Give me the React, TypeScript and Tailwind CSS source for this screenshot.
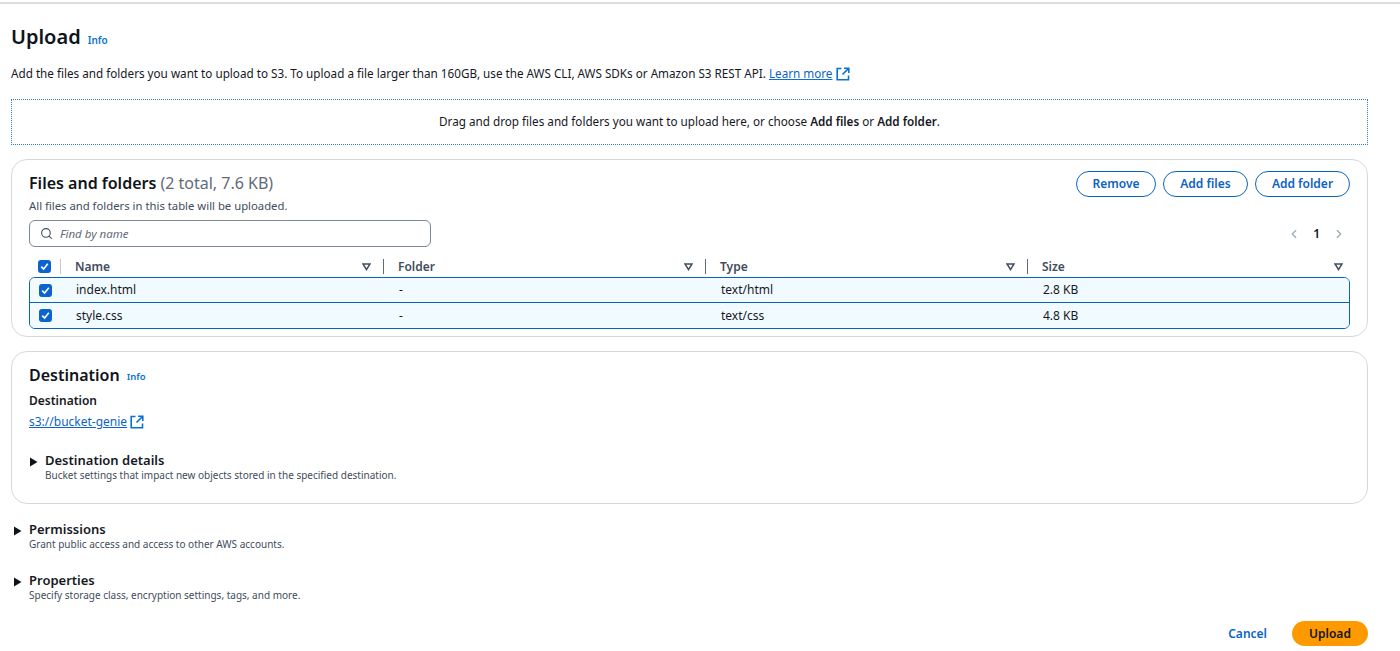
import React from "react";
import { Search, ChevronLeft, ChevronRight } from "lucide-react";

const grid = "grid grid-cols-[32px_323px_322px_322px_322px]";

function Ext() {
  return (
    <svg width="14" height="14" viewBox="0 0 14 14" fill="none" stroke="#0972d3" strokeWidth="1.6" className="shrink-0">
      <path d="M5.5 1.5H1.2v11.3h11.3V8.5" />
      <path d="M8 1.2h4.8V6" />
      <path d="M12.6 1.4 6.5 7.5" />
    </svg>
  );
}

function Check() {
  return (
    <span className="flex h-[13px] w-[13px] items-center justify-center rounded-[3px] bg-[#0b63d0]">
      <svg width="9" height="9" viewBox="0 0 9 9" fill="none" stroke="#fff" strokeWidth="1.6">
        <path d="M1.2 4.6 3.6 7 7.8 1.8" />
      </svg>
    </span>
  );
}

function Caret() {
  return (
    <svg width="9" height="8" viewBox="0 0 9 8" fill="none" stroke="#414d5c" strokeWidth="1.5" className="shrink-0">
      <path d="M1 1h7L4.5 6.6z" />
    </svg>
  );
}

function Arrow() {
  return (
    <svg width="9" height="10" viewBox="0 0 9 10" className="shrink-0">
      <path d="M1 .5 8.5 5 1 9.5z" fill="#0f141a" />
    </svg>
  );
}

function HeadCell({ label, last }: { label: string; last?: boolean }) {
  return (
    <div className="flex h-[18px] items-center pl-[14px]">
      <span className="text-[12px] font-semibold text-[#414d5c]">{label}</span>
      <span className={last ? "ml-auto mr-[7px] flex" : "ml-auto mr-[12px] flex"}>
        <Caret />
      </span>
      {!last && <span className="h-[15px] w-px bg-[#5f6b7a]" />}
    </div>
  );
}

function Row({ cells, first }: { cells: string[]; first?: boolean }) {
  return (
    <div
      className={
        grid +
        " items-center bg-[#f1faff] text-[12px] text-[#16191f] " +
        (first ? "h-[25px] border-b border-[#0b63b8]" : "h-[25px]")
      }
    >
      <div className="flex pl-[9px]">
        <Check />
      </div>
      {cells.map((c) => (
        <div key={c} className="pl-[14px]">
          {c}
        </div>
      ))}
    </div>
  );
}

function Expand({ title, sub, small }: { title: string; sub: string; small?: boolean }) {
  return (
    <div className={small ? "flex items-start gap-[7px]" : "flex items-start gap-[7px]"}>
      <span className="mt-[5px] flex">
        <Arrow />
      </span>
      <div>
        <div className="text-[13px] font-semibold leading-[16px] text-[#16191f]">{title}</div>
        <div className="text-[10px] leading-[14px] text-[#414d5c]">{sub}</div>
      </div>
    </div>
  );
}

function PillButton({ children, w }: { children: React.ReactNode; w: string }) {
  return (
    <button className={"flex h-[26px] items-center justify-center rounded-full border-[1.5px] border-[#0b63b8] text-[12px] font-semibold text-[#0b63c5] " + w}>
      {children}
    </button>
  );
}

export default function App() {
  return (
    <div className="h-[651px] w-[1400px] overflow-hidden bg-white font-['Noto_Sans',sans-serif] text-[#16191f]">
      <div className="mt-[2px] h-[2px] bg-[#dcdcdc]" />
      <div className="pl-[11px] pr-[32px]">
        <div className="mt-[20px] flex h-[26px] items-center gap-[7px]">
          <h1 className="text-[20px] font-semibold leading-[26px] text-[#0f141a]">Upload</h1>
          <span className="mt-[6px] text-[10px] font-semibold text-[#0972d3]">Info</span>
        </div>
        <p className="mt-[15px] flex h-[18px] items-center gap-[3px] text-[11.7px] text-[#16191f]">
          <span>Add the files and folders you want to upload to S3. To upload a file larger than 160GB, use the AWS CLI, AWS SDKs or Amazon S3 REST API.</span>
          <span className="underline decoration-[#0972d3] text-[#0b63c5]">Learn more</span>
          <span className="ml-[1px] flex">
            <Ext />
          </span>
        </p>
        <div className="mt-[16px] flex h-[46px] items-center justify-center border border-dotted border-[#2f7fc1] text-[11.7px]">
          <span>
            Drag and drop files and folders you want to upload here, or choose <b className="font-semibold">Add files</b> or <b className="font-semibold">Add folder</b>.
          </span>
        </div>

        <section className="mt-[14px] h-[178px] rounded-[16px] border border-[#d5d8dc] px-[17px] pt-[11px]">
          <div className="flex items-start justify-between">
            <div>
              <div className="flex h-[24px] items-center text-[16px] leading-[24px]">
                <span className="font-semibold text-[#0f141a]">Files and folders</span>
                <span className="ml-[4px] text-[#5f6b7a]">(2 total, 7.6 KB)</span>
              </div>
              <div className="mt-[3px] text-[11.3px] leading-[16px] text-[#414d5c]">All files and folders in this table will be uploaded.</div>
            </div>
            <div className="flex gap-[7px]">
              <PillButton w="w-[80px]">Remove</PillButton>
              <PillButton w="w-[85px]">Add files</PillButton>
              <PillButton w="w-[95px]">Add folder</PillButton>
            </div>
          </div>
          <div className="mt-[6px] flex h-[27px] items-center justify-between">
            <div className="flex h-[27px] w-[402px] items-center gap-[7px] rounded-[6px] border border-[#7d8998] pl-[10px]">
              <Search size={13} strokeWidth={2} className="text-[#414d5c]" />
              <span className="text-[11.5px] italic text-[#5f6b7a]">Find by name</span>
            </div>
            <div className="flex items-center gap-[12px] pr-[4px]">
              <ChevronLeft size={14} className="text-[#9ba7b6]" />
              <span className="text-[12px] font-semibold text-[#0f141a]">1</span>
              <ChevronRight size={14} className="text-[#9ba7b6]" />
            </div>
          </div>
          <div className={grid + " mt-[9px] h-[21px] items-center"}>
            <div className="flex h-[18px] items-center justify-between pl-[9px]">
              <Check />
              <span className="h-[15px] w-px bg-[#c6c6cd]" />
            </div>
            <HeadCell label="Name" />
            <HeadCell label="Folder" />
            <HeadCell label="Type" />
            <HeadCell label="Size" last />
          </div>
          <div className="overflow-hidden rounded-[6px] border-[1.5px] border-[#0b63b8]">
            <Row first cells={["index.html", "-", "text/html", "2.8 KB"]} />
            <Row cells={["style.css", "-", "text/css", "4.8 KB"]} />
          </div>
        </section>

        <section className="mt-[14px] h-[153px] rounded-[16px] border border-[#d5d8dc] px-[17px] pt-[11px]">
          <div className="flex h-[24px] items-center gap-[7px]">
            <h2 className="text-[16px] font-semibold text-[#0f141a]">Destination</h2>
            <span className="mt-[4px] text-[9.5px] font-semibold text-[#0972d3]">Info</span>
          </div>
          <div className="mt-[6px] text-[12px] font-semibold leading-[16px]">Destination</div>
          <div className="mt-[4px] flex h-[18px] items-center gap-[3px] text-[12px]">
            <span className="underline text-[#0b63c5]">s3://bucket-genie</span>
            <Ext />
          </div>
          <div className="mt-[21px]">
            <Expand title="Destination details" sub="Bucket settings that impact new objects stored in the specified destination." />
          </div>
        </section>

        <div className="mt-[17px] pl-[2px]">
          <Expand small title="Permissions" sub="Grant public access and access to other AWS accounts." />
        </div>
        <div className="mt-[21px] pl-[2px]">
          <Expand small title="Properties" sub="Specify storage class, encryption settings, tags, and more." />
        </div>

        <div className="mt-[19px] flex items-center justify-end gap-[25px]">
          <span className="text-[12px] font-semibold text-[#0b63c5]">Cancel</span>
          <button className="flex h-[25px] w-[76px] items-center justify-center rounded-full bg-[#ff9900] text-[12px] font-semibold text-[#0f141a]">Upload</button>
        </div>
      </div>
    </div>
  );
}
